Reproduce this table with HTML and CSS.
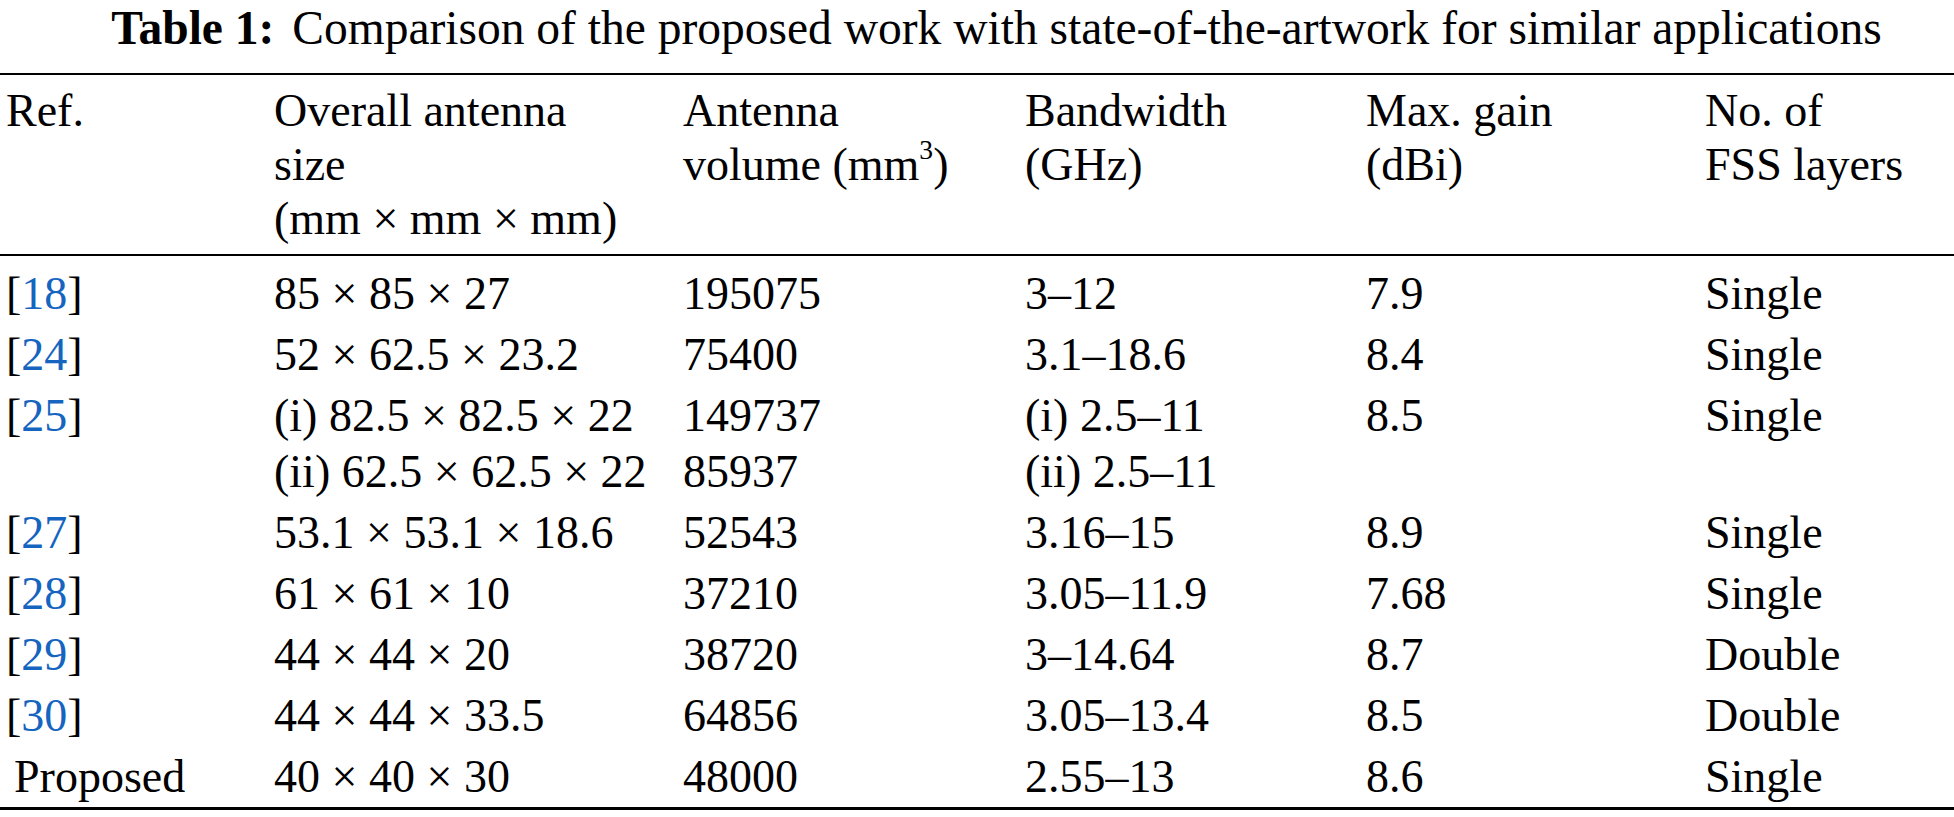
FILE: index.html
```html
<!DOCTYPE html>
<html>
<head>
  <title>Table 1</title>
  <link rel="stylesheet" href="styles.css">
</head>
<body>
  <div class="caption"><b>Table 1:</b> Comparison of the proposed work with state-of-the-artwork for similar applications</div>
  <table class="cmp">
    <colgroup>
      <col class="c1"><col class="c2"><col class="c3"><col class="c4"><col class="c5"><col class="c6">
    </colgroup>
    <thead>
      <tr>
        <th>Ref.</th>
        <th>Overall antenna<br>size<br>(mm × mm × mm)</th>
        <th>Antenna<br>volume (mm<sup>3</sup>)</th>
        <th>Bandwidth<br>(GHz)</th>
        <th>Max. gain<br>(dBi)</th>
        <th>No. of<br>FSS layers</th>
      </tr>
    </thead>
    <tbody>
      <tr>
        <td>[<a href="#">18</a>]</td><td>85 × 85 × 27</td><td>195075</td><td>3–12</td><td>7.9</td><td>Single</td>
      </tr>
      <tr>
        <td>[<a href="#">24</a>]</td><td>52 × 62.5 × 23.2</td><td>75400</td><td>3.1–18.6</td><td>8.4</td><td>Single</td>
      </tr>
      <tr>
        <td>[<a href="#">25</a>]</td><td>(i) 82.5 × 82.5 × 22<br>(ii) 62.5 × 62.5 × 22</td><td>149737<br>85937</td><td>(i) 2.5–11<br>(ii) 2.5–11</td><td>8.5</td><td>Single</td>
      </tr>
      <tr>
        <td>[<a href="#">27</a>]</td><td>53.1 × 53.1 × 18.6</td><td>52543</td><td>3.16–15</td><td>8.9</td><td>Single</td>
      </tr>
      <tr>
        <td>[<a href="#">28</a>]</td><td>61 × 61 × 10</td><td>37210</td><td>3.05–11.9</td><td>7.68</td><td>Single</td>
      </tr>
      <tr>
        <td>[<a href="#">29</a>]</td><td>44 × 44 × 20</td><td>38720</td><td>3–14.64</td><td>8.7</td><td>Double</td>
      </tr>
      <tr>
        <td>[<a href="#">30</a>]</td><td>44 × 44 × 33.5</td><td>64856</td><td>3.05–13.4</td><td>8.5</td><td>Double</td>
      </tr>
      <tr>
        <td class="own">Proposed</td><td>40 × 40 × 30</td><td>48000</td><td>2.55–13</td><td>8.6</td><td>Single</td>
      </tr>
    </tbody>
  </table>
</body>
</html>
```

FILE: styles.css
```css
body {
  margin: 0;
  background: #fff;
  color: #000;
  font-family: "Liberation Serif", "Times New Roman", serif;
  font-size: 46px;
}

.caption {
  text-align: center;
  font-size: 47.5px;
  line-height: 54px;
  padding: 1px 0 0 39px;
  height: 72px;
  white-space: nowrap;
}

.caption b {
  margin-right: 6px;
}

.cmp {
  width: 1954px;
  border-collapse: collapse;
  table-layout: fixed;
  border-top: 2px solid #000;
  border-bottom: 3px solid #000;
}

.c1 { width: 268px; }
.c2 { width: 409px; }
.c3 { width: 342px; }
.c4 { width: 341px; }
.c5 { width: 339px; }
.c6 { width: 255px; }

.cmp th {
  font-weight: normal;
  text-align: left;
  vertical-align: top;
  line-height: 54px;
  padding: 9px 0 8px 6px;
  border-bottom: 2px solid #000;
}

.cmp sup {
  font-size: 60%;
  line-height: 0;
  vertical-align: 0.75em;
}

.cmp td {
  text-align: left;
  vertical-align: top;
  line-height: 56px;
  padding: 2.5px 0 2.5px 6px;
  white-space: nowrap;
}

.cmp tbody tr:first-child td {
  padding-top: 9.5px;
}

.cmp td.own {
  padding-left: 14px;
}

.cmp a {
  color: #1565c0;
  text-decoration: none;
}
```
